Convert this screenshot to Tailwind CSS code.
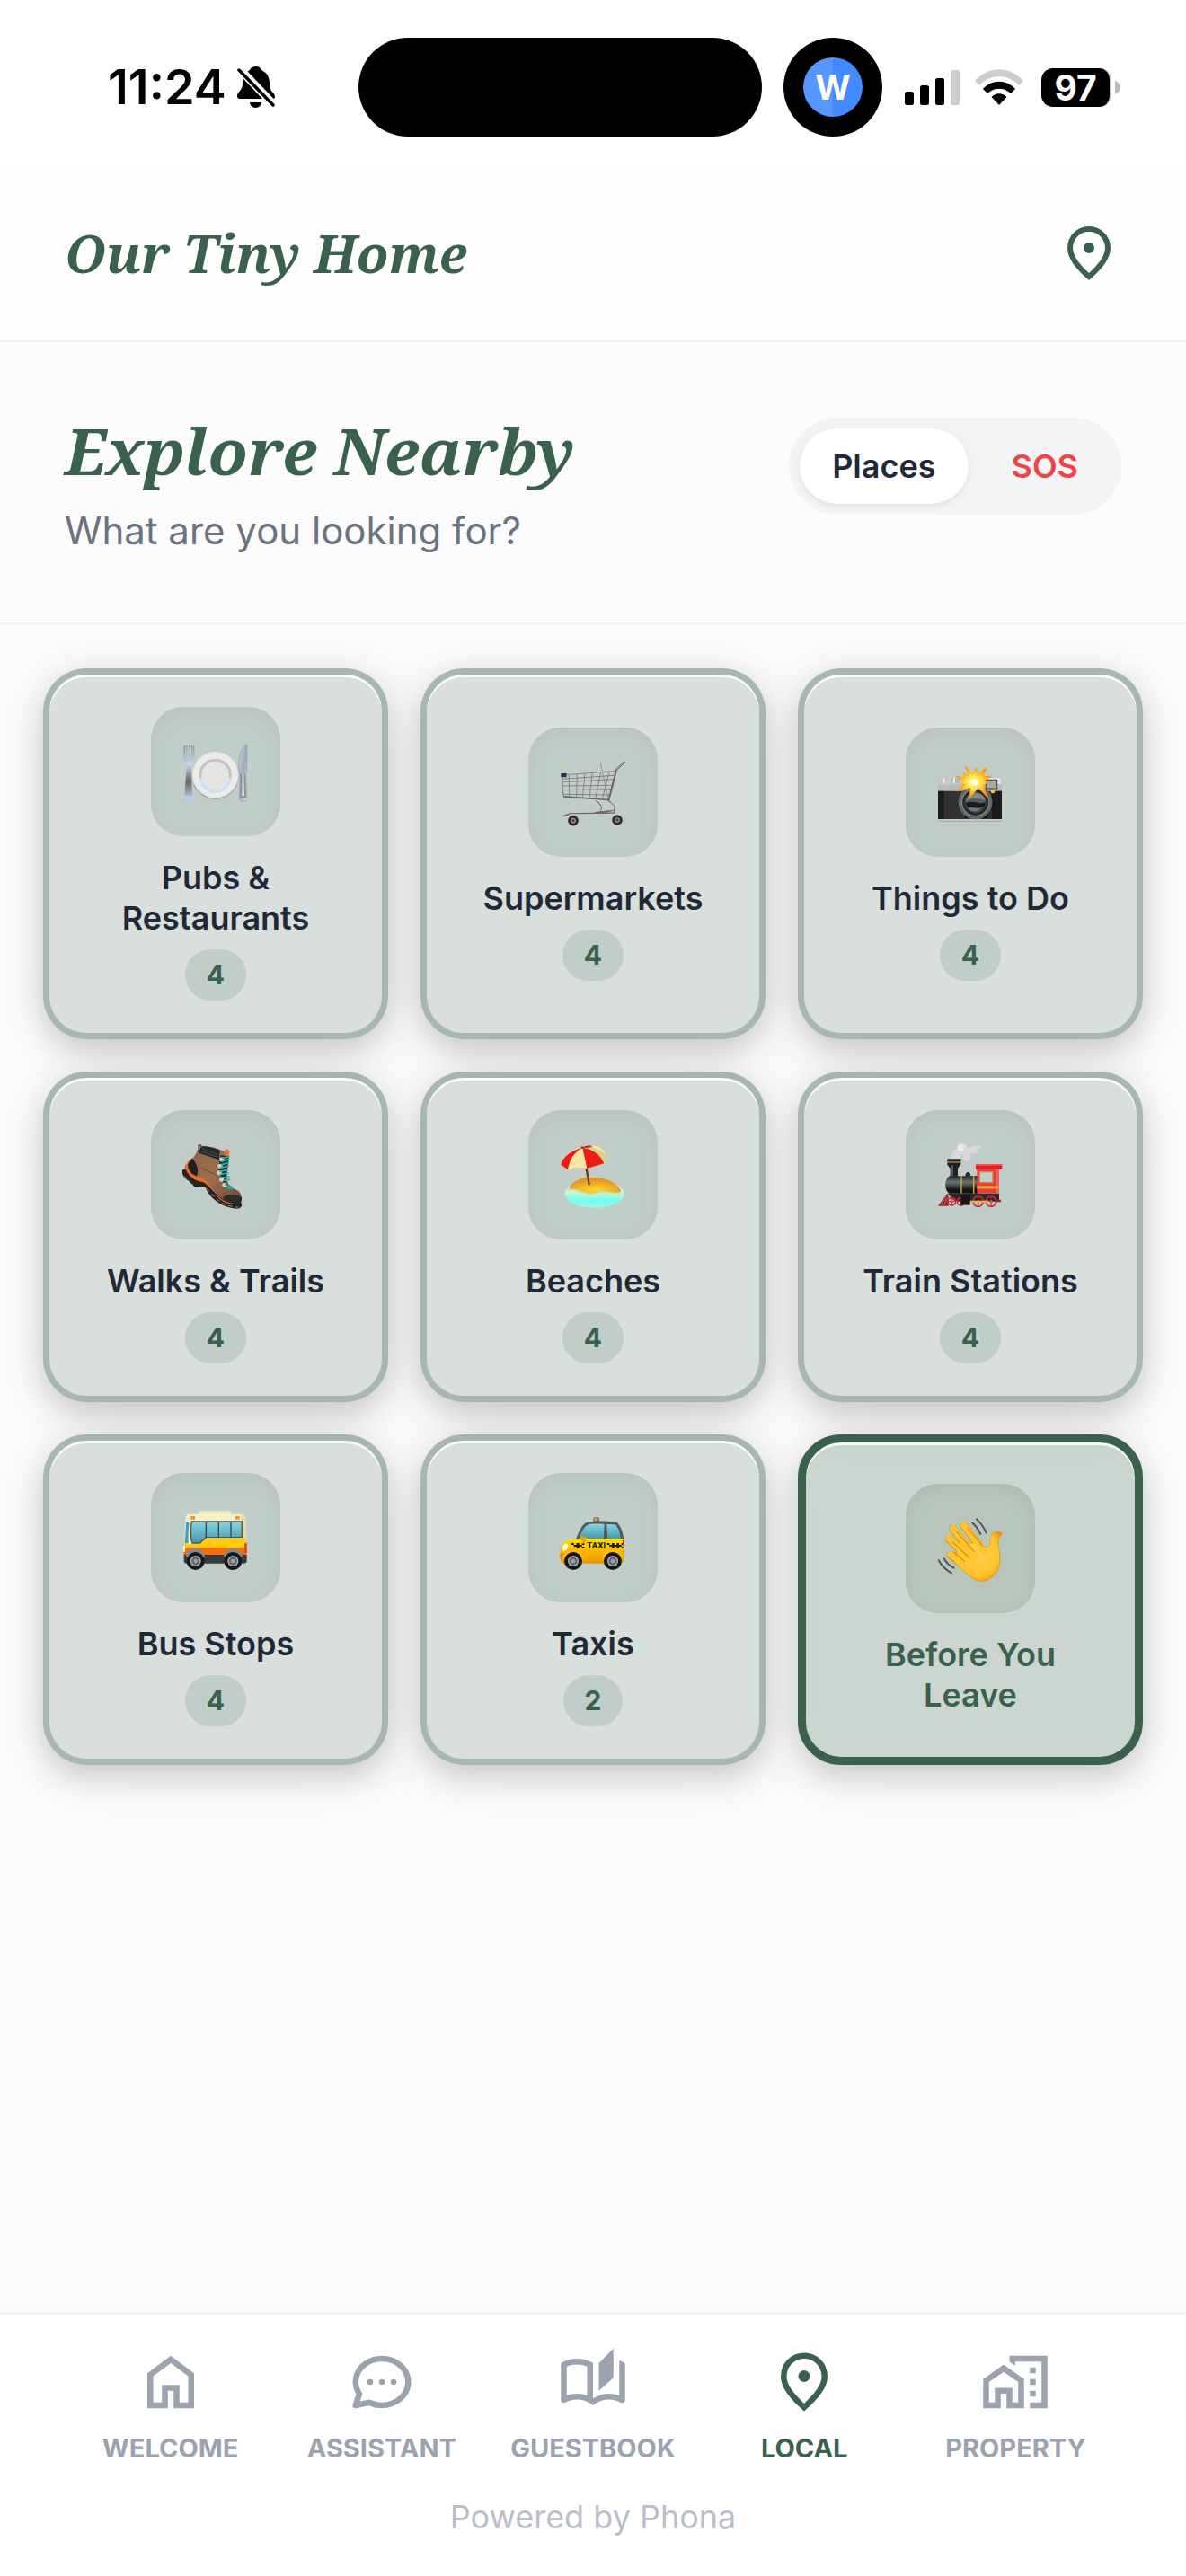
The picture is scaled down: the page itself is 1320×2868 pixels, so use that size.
<!DOCTYPE html>
<html lang="en">
<head>
<meta charset="utf-8">
<meta name="viewport" content="width=device-width, initial-scale=1">
<title>Our Tiny Home</title>
<script src="https://cdn.jsdelivr.net/npm/@tailwindcss/browser@4"></script>
</head>
<body class="flex min-h-screen flex-col bg-[#fcfcfc] font-['Inter',sans-serif] text-[#1f2937]">

<!-- Status bar -->
<div class="bg-white pt-[42px] pb-[34px]">
  <div class="flex h-[110px] items-center pr-[72px] pl-[120px] text-black">
    <span class="w-[144px] text-[54px] leading-none font-semibold">11:24</span>
    <svg class="h-[46px] w-[42px]" viewBox="0 0 42 46">
      <path d="M21 0c3 0 5 1.500 6 4 6 3 9 7 9 16 0 8 6 9 6 14 0 1-1 2-2 2H3c-2 0-3-1-3-3 0-5 6-6 6-14 0-8 3-12 8-15 1-3 4-4 7-4zM14 40h13c0 3-3 6-6.500 6S14 43 14 40z"/>
      <path d="M0 0l42 44" stroke="#fff" stroke-width="9"/>
      <path d="M2 4l38 39" stroke="#000" stroke-width="3.500" stroke-linecap="round"/>
    </svg>
    <div class="ml-[93px] h-[110px] w-[449px] rounded-full bg-black"></div>
    <div class="ml-6 flex size-[110px] items-center justify-center rounded-full bg-black">
      <div class="flex size-[66px] items-center justify-center rounded-full bg-linear-to-r from-[#5896ff] from-50% to-[#4389ff] to-50% text-[38px] leading-none font-bold text-white">W</div>
    </div>
    <svg class="ml-6 h-[40px] w-[62px]" viewBox="0 0 62 40">
      <rect x="1" y="25" width="10" height="15" rx="2.500"/><rect x="18" y="18" width="10" height="22" rx="2.500"/><rect x="35" y="10" width="10" height="30" rx="2.500"/><rect x="52" y="1" width="10" height="39" rx="2.500" fill="#ccc"/>
    </svg>
    <svg class="ml-[17px] h-[40px] w-[54px]" viewBox="0 0 54 40">
      <path d="M0 13C15-4 39-4 54 13l-5 5C36 5 18 5 5 18z" fill="#ccc"/>
      <path d="M9 22c10-11 26-11 36 0l-5 5c-8-7-18-7-26 0zM18.500 31c5-5 12-5 17 0L27 40z"/>
    </svg>
    <div class="ml-5 flex h-[43px] w-[78px] items-center justify-center rounded-[13px] border-r-2 border-[#ccc] bg-black text-[39px] leading-none font-bold text-white">97</div>
    <svg class="ml-1 h-[15px] w-[6px]" viewBox="0 0 6 15"><path d="M0 0c8 3 8 12 0 15z" fill="#bbb"/></svg>
  </div>
</div>

<header class="flex h-[195px] items-center justify-between border-b-3 border-[#f1f1f2] bg-[#fefefe] px-[72px] text-[#3a614d]">
  <p class="font-['Noto_Serif','Liberation_Serif',serif] text-[58px] leading-[84px] font-bold italic">Our Tiny Home</p>
  <button type="button" aria-label="Location" class="size-[72px]">
    <svg viewBox="0 0 24 24" fill="currentColor"><path d="M12 19.350q3.050-2.800 4.525-5.088T18 10.200q0-2.725-1.738-4.462T12 4 7.738 5.738 6 10.200q0 1.775 1.475 4.063T12 19.350M12 22q-4.025-3.425-6.012-6.362T4 10.200q0-3.750 2.413-5.975T12 2t5.588 2.225T20 10.200q0 2.500-1.987 5.438T12 22"/><circle cx="12" cy="10" r="2"/></svg>
  </button>
</header>

<section class="flex items-start justify-between border-b-3 border-[#f2f2f3] px-[72px] pt-[72px] pb-[72px]">
  <div>
    <h1 class="font-['Noto_Serif','Liberation_Serif',serif] text-[72px] leading-[96px] font-bold text-[#3a614d] italic">Explore Nearby</h1>
    <p class="mt-3 text-[42px] leading-[60px] text-[#6b7280]">What are you looking for?</p>
  </div>
  <div class="mt-3 flex gap-3 rounded-full bg-[#f3f4f6] p-3 text-[36px] leading-[48px] font-semibold">
    <button type="button" class="rounded-full bg-white px-9 py-[18px] shadow-[0_3px_9px_rgba(0,0,0,0.08)]">Places</button>
    <button type="button" class="rounded-full px-9 py-[18px] text-[#ef4444]">SOS</button>
  </div>
</section>

<main class="flex-1 px-12 pt-12 pb-12">
  <div id="grid" class="grid grid-cols-3 gap-9"></div>
</main>

<footer class="border-t-3 border-[#f1f1f2] bg-white px-[72px] pt-9 pb-9">
  <nav class="grid grid-cols-5 text-[29px] leading-[45px] font-bold text-[#9ca3af]">
    <a href="#welcome" class="flex flex-col items-center gap-3">
      <svg class="size-[78px]" viewBox="0 0 24 24" fill="currentColor"><path d="M6 19h3v-6h6v6h3v-9l-6-4.500L6 10zm-2 2V9l8-6 8 6v12h-7v-6h-2v6z"/></svg>WELCOME</a>
    <a href="#assistant" class="flex flex-col items-center gap-3">
      <svg class="size-[78px]" viewBox="0 0 24 24" fill="none" stroke="currentColor" stroke-width="2" stroke-linecap="round" stroke-linejoin="round"><path d="M3 20l1.300-3.900C1.976 12.663 2.874 8.228 6.400 5.726c3.526-2.501 8.590-2.296 11.845.480 3.255 2.777 3.695 7.266 1.029 10.501C16.608 19.942 11.659 20.922 7.700 19L3 20M12 12v.010M8 12v.010M16 12v.010"/></svg>ASSISTANT</a>
    <a href="#guestbook" class="flex flex-col items-center gap-3">
      <svg class="size-[78px]" viewBox="0 0 24 24" fill="currentColor"><path d="M22.470 5.200C22 4.960 21.510 4.760 21 4.590v12.030C19.860 16.210 18.690 16 17.500 16c-1.900 0-3.780.540-5.500 1.580V5.480C10.380 4.550 8.510 4 6.500 4 4.710 4 3.020 4.440 1.530 5.200 1.200 5.360 1 5.710 1 6.080v12.080c0 .580.470.990 1 .990.160 0 .320-.040.480-.120C3.690 18.400 5.050 18 6.500 18c2.070 0 3.980.820 5.500 2 1.520-1.180 3.430-2 5.500-2 1.450 0 2.810.400 4.020 1.040.160.080.320.120.480.120.520 0 1-.410 1-.990V6.080c0-.370-.200-.720-.530-.880zM10 16.620C8.860 16.210 7.690 16 6.500 16s-2.360.210-3.500.620V6.710C4.110 6.240 5.280 6 6.500 6c1.200 0 2.390.250 3.500.720zM19 .500l-5 5V15l5-4.500z"/></svg>GUESTBOOK</a>
    <a href="#local" aria-current="page" class="flex flex-col items-center gap-3 text-[#3a614d]">
      <svg class="size-[78px]" viewBox="0 0 24 24" fill="currentColor"><path d="M12 19.350q3.050-2.800 4.525-5.088T18 10.200q0-2.725-1.738-4.462T12 4 7.738 5.738 6 10.200q0 1.775 1.475 4.063T12 19.350M12 22q-4.025-3.425-6.012-6.362T4 10.200q0-3.750 2.413-5.975T12 2t5.588 2.225T20 10.200q0 2.500-1.987 5.438T12 22"/><circle cx="12" cy="10" r="2"/></svg>LOCAL</a>
    <a href="#property" class="flex flex-col items-center gap-3">
      <svg class="size-[78px]" viewBox="0 0 24 24" fill="currentColor"><path d="M1 11v10h6v-5h2v5h6V11L8 6zm12 8h-2v-5H5v5H3v-7l5-3.500 5 3.500zM17 7h2v2h-2zM17 11h2v2h-2zM17 15h2v2h-2zM10 3v1.970l2 1.430V5h9v14h-4v2h6V3z"/></svg>PROPERTY</a>
  </nav>
  <p class="mt-6 text-center text-[36px] leading-[60px] text-[#b9bec9]">Powered by Phona</p>
</footer>

<!-- Shared gradients for the category pictures -->
<svg class="absolute size-0" aria-hidden="true">
  <defs>
    <linearGradient id="steel" x1="0" y1="0" x2="0" y2="1"><stop offset="0" stop-color="#8d9298"/><stop offset=".35" stop-color="#c2d5ee"/><stop offset=".65" stop-color="#666"/><stop offset="1" stop-color="#bcd2ee"/></linearGradient>
    <linearGradient id="blade" x1="0" y1="0" x2="1" y2="1"><stop offset="0" stop-color="#c7d9ec"/><stop offset=".5" stop-color="#9eabb9"/><stop offset="1" stop-color="#d5e4f5"/></linearGradient>
    <linearGradient id="glass" x1="0" y1="0" x2="0" y2="1"><stop offset="0" stop-color="#86d5dd"/><stop offset="1" stop-color="#4398b3"/></linearGradient>
    <linearGradient id="leather" x1="0" y1="0" x2="1" y2="1"><stop offset="0" stop-color="#8a6144"/><stop offset=".5" stop-color="#9a704f"/><stop offset="1" stop-color="#6e4a33"/></linearGradient>
    <radialGradient id="sand" cx=".5" cy=".75" r=".6"><stop offset="0" stop-color="#ffdc1e"/><stop offset="1" stop-color="#e2962a"/></radialGradient>
    <linearGradient id="sea" x1="0" y1="0" x2="0" y2="1"><stop offset=".4" stop-color="#cdf7d0"/><stop offset=".75" stop-color="#6ffff0"/><stop offset="1" stop-color="#a5f3e6"/></linearGradient>
    <linearGradient id="boiler" x1="0" y1="0" x2="0" y2="1"><stop offset="0" stop-color="#222"/><stop offset=".35" stop-color="#6b7473"/><stop offset=".8" stop-color="#111"/></linearGradient>
    <radialGradient id="flash"><stop offset="0" stop-color="#fff"/><stop offset=".25" stop-color="#fff36a"/><stop offset=".65" stop-color="#ffc21c"/><stop offset="1" stop-color="#f98a0c"/></radialGradient>
    <linearGradient id="cab" x1="0" y1="0" x2="0" y2="1"><stop offset="0" stop-color="#ffe100"/><stop offset="1" stop-color="#f09000"/></linearGradient>
    <radialGradient id="palm" cx=".5" cy=".45" r=".6"><stop offset="0" stop-color="#ffd253"/><stop offset=".75" stop-color="#ffc22b"/><stop offset="1" stop-color="#e89a0c"/></radialGradient>
  </defs>
</svg>

<script>
const wheel = (x, y) => `<circle cx="${x}" cy="${y}" r="30" fill="#16181b"/><circle cx="${x}" cy="${y}" r="18" fill="#b4b8bd"/><circle cx="${x}" cy="${y}" r="14" fill="#62676e"/><circle cx="${x}" cy="${y}" r="7" fill="#9a9fa6"/>`;
const engineWheel = (x, r) => `<circle cx="${x}" cy="197" r="${r}" fill="none" stroke="#cf2f38" stroke-width="5"/><path d="M${x - r} 197h${2 * r}M${x} ${197 - r}v${2 * r}" stroke="#b3232c" stroke-width="3"/><circle cx="${x}" cy="197" r="5" fill="#e8474f"/>`;

const art = {
  plate: `<circle cx="107" cy="121" r="79" fill="#8f9894"/><circle cx="107" cy="119" r="78" fill="#e2e3e3"/><circle cx="107" cy="119" r="74" fill="#ebebea"/>
    <circle cx="107" cy="120" r="55" fill="#c3c3c2"/><path d="M54 128a53 53 0 0 0 106 0" fill="#cfe0f5"/><circle cx="107" cy="120" r="46" fill="#e4e4e3"/>
    <path d="M3 21h4v42h3V20h4v43h5V20h4v43h4V20h4v43h2V21h3c2 20 3 40 0 54-2 9-9 12-10 20l4 95c0 20-28 20-26 0l7-95c-1-8-8-11-10-20-2-14-2-34 2-54z" fill="url(#steel)"/>
    <path d="M5 188h27v14c-2 7-25 7-27 0z" fill="#b5cdea"/>
    <path d="M212 18v90l-4 6 5 85c-2 11-24 11-26 0l3-85-4-8c-3-40 5-80 26-88z" fill="url(#blade)" stroke="#8b959d" stroke-width="2"/><path d="M191 116h15l4 80h-20z" fill="#8a9097"/><path d="M197 116h5l2 74h-8z" fill="#d9e2ec"/>`,
  cart: `<g fill="none" stroke="#7b7372" stroke-width="2.500"><path d="M4 51l180-14M5 64l175-12M6 74l172-9M7 87l168-2M8 101l162-3M8 115l158 2M9 121l151 12M28 50l1 75M55 48l-2 78M81 46l-8 83M106 44l-10 85M134 41l-18 91M162 40l-24 93M5 60l4 62"/><path d="M133 10l27 124" stroke-width="2"/></g>
    <path d="M212 8l-26 25-26 103" fill="none" stroke="#6e6666" stroke-width="6" stroke-linecap="round" stroke-linejoin="round"/><path d="M211 8l-25 25" stroke="#c9c5c5" stroke-width="2"/>
    <path d="M9 123l151 11M118 136c20 16 26 28 12 36M162 137c8 9 18 14 18 22v18M180 165c-3 9-50 7-66 12M8 188l24-8 148-3" fill="none" stroke="#6c6665" stroke-width="4"/><path d="M118 133c24 18 27 32 12 38M164 137c13 13 17 25 9 31M30 182h147" fill="none" stroke="#ddd8d7" stroke-width="2"/>
    <path d="M32 182h16l6 22h-16zM174 181h16l6 22h-16z" fill="#cdc7c8"/>
    <circle cx="42" cy="203" r="13" fill="#a09695" stroke="#302b2d" stroke-width="9"/><circle cx="189" cy="201" r="13" fill="#a09695" stroke="#302b2d" stroke-width="9"/><circle cx="42" cy="203" r="5" fill="#4b4446"/><circle cx="189" cy="201" r="5" fill="#4b4446"/>
    <path d="M1 45h19v13H1z" fill="#1d3a50"/>`,
  camera: `<rect x="10" y="60" width="29" height="22" rx="4" fill="#c7c9cb"/><rect x="44" y="60" width="29" height="22" rx="4" fill="#b6b9bb"/><path d="M17 61h5v18h-5zM51 61h5v18h-5z" fill="#f4f4f4"/>
    <path d="M0 79h75l14-21h124v50H0z" fill="#b9bcbe"/><path d="M3 80h72l14-20h122v22H3z" fill="#dfe1e2"/><path d="M0 104h213v102H0z" fill="#303132"/><path d="M0 104h20v95H0zM180 104h33v95h-33z" fill="#1c1c1d"/><path d="M72 150l20 45h70l25-45-7-30H80z" fill="#0b0b0c"/><path d="M0 198h213v8H0z" fill="#c4c6c7"/>
    <rect x="160" y="67" width="37" height="29" fill="#aaa79e" stroke="#3b3b3b" stroke-width="3"/><circle cx="183" cy="105" r="7" fill="#f1c945"/>
    <circle cx="125" cy="142" r="57" fill="#626466"/><circle cx="125" cy="142" r="47" fill="#929496"/><circle cx="125" cy="142" r="44" fill="#292b2d"/><circle cx="125" cy="142" r="34" fill="#565b5d"/><path d="M92 138c20-15 45-8 66-4-8-28-52-34-66 4z" fill="#81898c"/><path d="M93 144c25-11 44 8 65-3 0 38-58 42-65 3z" fill="#15191b"/><path d="M100 161c14-6 35 7 51-6-8 16-36 25-51 6z" fill="#6e7679"/>
    <path d="M91 21l25 28 11-24 6 26 28-26-9 31 27-2-23 15 10 5-15 12 15 41-31-33-30 34 3-34-48 11 31-21-16-2 10-10-27-19 32 7-6-18 18 13z" fill="url(#flash)" stroke="#fa980f" stroke-width="2"/><circle cx="123" cy="75" r="10" fill="#fff"/>`,
  boot: `<path d="M-3 92c-2 16 6 27 21 37l21 20 33-2c18 43 57 68 96 73 15 3 25 0 28-11l-6-18-60-17L80 130 23 79z" fill="#26231f"/><path d="M3 112l15 24M16 126l11 19M31 137l-2 11M77 153l10 10M94 172l12 9M111 190l11 7M129 202l12 5M150 211l14 3M174 216h10" stroke="#c3cdc6" stroke-width="2"/>
    <path d="M4 82c11 28 31 46 57 49 28 3 50 72 127 70l5-17-92-38-80-88C13 68 8 73 4 82z" fill="#e96c2c"/>
    <path d="M47 25c-5 20-22 34-32 50 10 20 28 38 50 45 30 15 40 75 107 78 20 0 24-12 20-25-8-17-24-17-41-26-5-27-7-40-2-73l-8-43-40-15z" fill="url(#leather)"/>
    <path d="M29 52c19 23 23 41 16 61-21-8-32-25-29-41z" fill="#20201f"/><path d="M57 15c14-8 46 4 65 12l-3 31-66-23z" fill="#252628"/><path d="M61 20l56 20M59 29l58 20" stroke="#4b4e52" stroke-width="3"/>
    <path d="M52 33V10h9" fill="none" stroke="#513a2c" stroke-width="5"/><path d="M138 31c0-14 15-11 16 0l-1 20-12-3z" fill="#ee742c"/>
    <path d="M124 42l29 5-12 84 27 24-30-12-22-50z" fill="#2a2a29"/><g fill="#d3d1cc"><circle cx="129" cy="57" r="8"/><circle cx="123" cy="79" r="8"/><circle cx="121" cy="101" r="8"/><circle cx="128" cy="123" r="8"/><circle cx="138" cy="142" r="8"/></g>
    <path d="M131 52l22-4M129 63l23-7M127 74l24-6M124 84l26-5M122 97l26-5M124 106l25-4M131 117l22-3M134 127l21-3M140 140l21 8M150 152l16 1" stroke="#19b7b4" stroke-width="5" stroke-linecap="round"/>
    <path d="M132 184c17-15 46-13 63-2 3 28-19 29-35 22-14-4-24-12-28-20z" fill="#2b2b2b"/><path d="M110 176c16 17 39 28 56 29" fill="none" stroke="#e96c2c" stroke-width="4"/><path d="M62 85c24 16 49 18 57 36" fill="none" stroke="#684832" stroke-width="3"/>`,
  beach: `<ellipse cx="113" cy="172" rx="99" ry="46" fill="url(#sea)"/><path d="M27 157c9-29 42-41 76-40 49-2 88 17 99 45-19 20-50-9-83 8-29 9-51-9-92-13z" fill="url(#sand)"/><path d="M23 157c43-1 62 24 99 12 29-14 55 13 80-3" fill="none" stroke="#d3ddb9" stroke-width="6"/>
    <path d="M84 77l11 62" stroke="#713816" stroke-width="7" stroke-linecap="round"/>
    <path d="M73 17C35 27 5 50 1 74l23 17c25-8 44-9 64-4l57-17c19-49-27-72-72-53z" fill="#f4e6a5"/><path d="M73 17C35 27 5 50 1 74l23 17C29 60 43 34 73 17zM73 17l15 70 57-17c-8-26-35-49-72-53z" fill="#ee1c16"/><path d="M73 17c34-7 68 6 82 38l-10 15c-10-27-34-46-72-53z" fill="#dfd08a"/><path d="M73 17c12-8 30-7 34-4l-18 6z" fill="#dd2018"/><circle cx="72" cy="17" r="4" fill="#8b3f17"/>`,
  train: `<g fill="#d9d8de"><circle cx="80" cy="20" r="18"/><circle cx="62" cy="40" r="16"/><circle cx="51" cy="52" r="9"/><circle cx="95" cy="47" r="14"/><circle cx="108" cy="27" r="12"/><circle cx="122" cy="20" r="9"/><circle cx="136" cy="16" r="7"/><circle cx="125" cy="30" r="6"/></g><circle cx="76" cy="17" r="10" fill="#ecebef"/>
    <path d="M31 170L0 212h35v-30z" fill="#8e1f25"/><path d="M28 178L9 210M31 184l-12 27" stroke="#cf9095" stroke-width="2"/>
    <path d="M31 55h45v18l-10 14v26H41V87L31 74z" fill="#1f2021"/><path d="M31 66h45" stroke="#b38c2f" stroke-width="4"/><path d="M48 76v36" stroke="#616565" stroke-width="5"/><path d="M91 112c0-17 18-17 18 0z" fill="#2a2524"/>
    <path d="M132 112H38c-18 10-18 50 0 58h94z" fill="url(#boiler)"/><path d="M78 112v58M119 112v58" stroke="#ddb034" stroke-width="4"/><path d="M31 170h173v25H55z" fill="#27282b"/>
    <path d="M130 90h74v80h-74z" fill="#e83b3d"/><path d="M192 90h12v80h-12z" fill="#f65c5c"/><path d="M139 98h44v36h-44z" fill="#c4ccc6" stroke="#b39140" stroke-width="4"/><path d="M130 145h72v9h-72z" fill="#f4ab28"/><path d="M126 72h88v18h-88z" fill="#e81f22"/><path d="M126 72h88v5h-88z" fill="#fa5251"/>
    ${engineWheel(46, 13)}${engineWheel(77, 13)}${engineWheel(134, 17)}${engineWheel(177, 17)}<path d="M76 174h31v35H76z" fill="#15171a"/><path d="M108 197h62" stroke="#f0b12c" stroke-width="6"/><path d="M192 195h18" stroke="#a92026" stroke-width="8"/>`,
  bus: `<rect x="53" y="19" width="106" height="15" rx="5" fill="#f1eac1"/><path d="M18 29h170c14 0 20 6 20 18l2 90H3L8 42c1-10 4-13 10-13z" fill="#f8f0c8"/><path d="M193 32c10 1 14 7 14 15l2 90h-12z" fill="#e6d89c"/>
    <path d="M3 128h45l20-17h141l3 36H1z" fill="#ffcb0b"/><path d="M1 142h211v24H1z" fill="#fa6b0e"/><path d="M2 165h210v20c0 6-4 9-9 9H11c-6 0-9-3-9-9z" fill="#35383e"/>
    <path d="M28 54h168v53H76l-21 19H30c-6-15-5-50-2-72z" fill="url(#glass)" stroke="#4e5653" stroke-width="4"/><path d="M76 54v54M118 54v52M159 54v52" stroke="#3d4444" stroke-width="4"/><path d="M10 54h10c-3 22-4 50-3 73H5z" fill="#3aa0bb"/>
    <path d="M25 36h14v11H25zM174 36h14v11h-14z" fill="#f39c18"/><path d="M205 126h7v33h-7z" fill="#e73820"/><path d="M0 135h6v20H0z" fill="#fff3d8"/>
    <path d="M9 172c4-36 58-36 63 0zM135 172c4-36 58-36 63 0z" fill="#86898a"/>${wheel(41, 186)}${wheel(166, 186)}`,
  taxi: `<rect x="109" y="40" width="20" height="16" rx="5" fill="#7d7466"/><path d="M114 43h9v9h-9z" fill="#f1a22a"/>
    <path d="M50 116c9-27 22-56 40-60 26-5 74-5 98 1 15 14 21 38 23 60z" fill="#53585c"/><path d="M61 112c8-22 18-44 33-49 15-2 38-2 52 0l-3 49zM154 63l28 1c12 12 17 31 19 48h-44z" fill="url(#glass)"/>
    <path d="M-2 165c-2-18 6-41 22-47 15-6 33-7 48-7h144v62c1 15-6 21-15 21H10c-8 0-11-12-12-29z" fill="url(#cab)"/>
    <path d="M35 126h9v6h9v-6h9v6h9v-6h8v6h-8v6h8v6h-8v-6h-9v6h-9v-6h-9v-6h-9zM155 126h8v6h8v-6h8v6h8v-6h8v6h8v-6h6v6h-6v6h6v6h-6v-6h-8v6h-8v-6h-8v6h-8v-6h-8v-6h-8z" fill="#1d1b12"/>
    <text x="119" y="144" text-anchor="middle" font-family="Roboto" font-weight="700" font-size="29" fill="#1d1b12">TAXI</text>
    <path d="M64 107c6-5 18-4 22 2v10c-6 3-9 8-14 11l-2-12c-7-2-9-7-6-11z" fill="#f0a409"/><ellipse cx="15" cy="140" rx="8" ry="13" fill="#fff6e3" transform="rotate(25 15 140)"/><path d="M207 116h5v18h-5z" fill="#d8262e"/><path d="M-2 162h24v24H6c-6 0-8-12-8-24z" fill="#e98c0e"/>
    <path d="M7 180c0-43 70-43 70 0zM138 180c0-43 70-43 70 0z" fill="#ffb90f"/>${wheel(42, 186)}${wheel(174, 186)}`,
  wave: `<g fill="none" stroke="#dc930c" stroke-width="26" stroke-linecap="round"><path d="M86 31l68 88M50 42l74 92M37 76l80 78M42 130l60 45"/></g>
    <path d="M70 88c28 0 60 0 80 10 14 8 18 6 24-4 0-24 4-39 19-43 12-4 20 2 20 8-10 14-14 22-11 42 8 50 8 72-16 97-28 26-53 24-75 7L54 156z" fill="url(#palm)" stroke="#dc930c" stroke-width="2"/>
    <g fill="none" stroke="#ffc530" stroke-width="22" stroke-linecap="round"><path d="M86 30l68 88M50 41l74 92M37 75l80 78M42 128l66 49"/></g>
    <path d="M100 40l48 59M63 52l58 67M49 86l53 51M52 120l36 31" fill="none" stroke="#dc930c" stroke-width="4" stroke-linecap="round"/>
    <path d="M115 23c12 9 20 23 27 37M128 10c14 11 25 28 33 46M2 148c9 16 24 32 43 42M20 142c8 14 18 24 33 31" fill="none" stroke="#515753" stroke-width="6" stroke-linecap="round"/>`
};

const places = [
  ["Pubs & Restaurants", 4, "plate"], ["Supermarkets", 4, "cart"], ["Things to Do", 4, "camera"],
  ["Walks & Trails", 4, "boot"], ["Beaches", 4, "beach"], ["Train Stations", 4, "train"],
  ["Bus Stops", 4, "bus"], ["Taxis", 2, "taxi"], ["Before You Leave", 0, "wave"]
];

document.getElementById("grid").innerHTML = places.map(([name, count, key]) => {
  const tone = count
    ? "border-7 border-[#3a614d]/30 bg-[#3a614d]/18 text-[#1f2937] px-9"
    : "border-9 border-[#3a614d] bg-[#3a614d]/25 text-[#3a614d] px-12";
  return `<button type="button" class="flex flex-col items-center justify-center rounded-[48px] py-9 ${tone} shadow-[inset_0_3px_0_rgba(255,255,255,0.85),0_12px_60px_rgba(0,0,0,0.12),0_12px_30px_rgba(0,0,0,0.12)]">
    <span class="flex size-36 items-center justify-center rounded-[36px] bg-[#3a614d]/14 shadow-[inset_0_6px_18px_rgba(0,0,0,0.05)]"><svg class="size-[72px] overflow-visible" viewBox="0 0 216 216" aria-hidden="true">${art[key]}</svg></span>
    <span class="mt-6 text-center text-[36px] leading-[45px] font-semibold">${name.replace("&", "&amp;")}</span>
    ${count ? `<span class="mt-3 rounded-full bg-[#3a614d]/14 px-6 py-[6px] text-[30px] leading-[45px] font-bold text-[#3a614d]">${count}</span>` : ""}
  </button>`;
}).join("");
</script>
</body>
</html>
